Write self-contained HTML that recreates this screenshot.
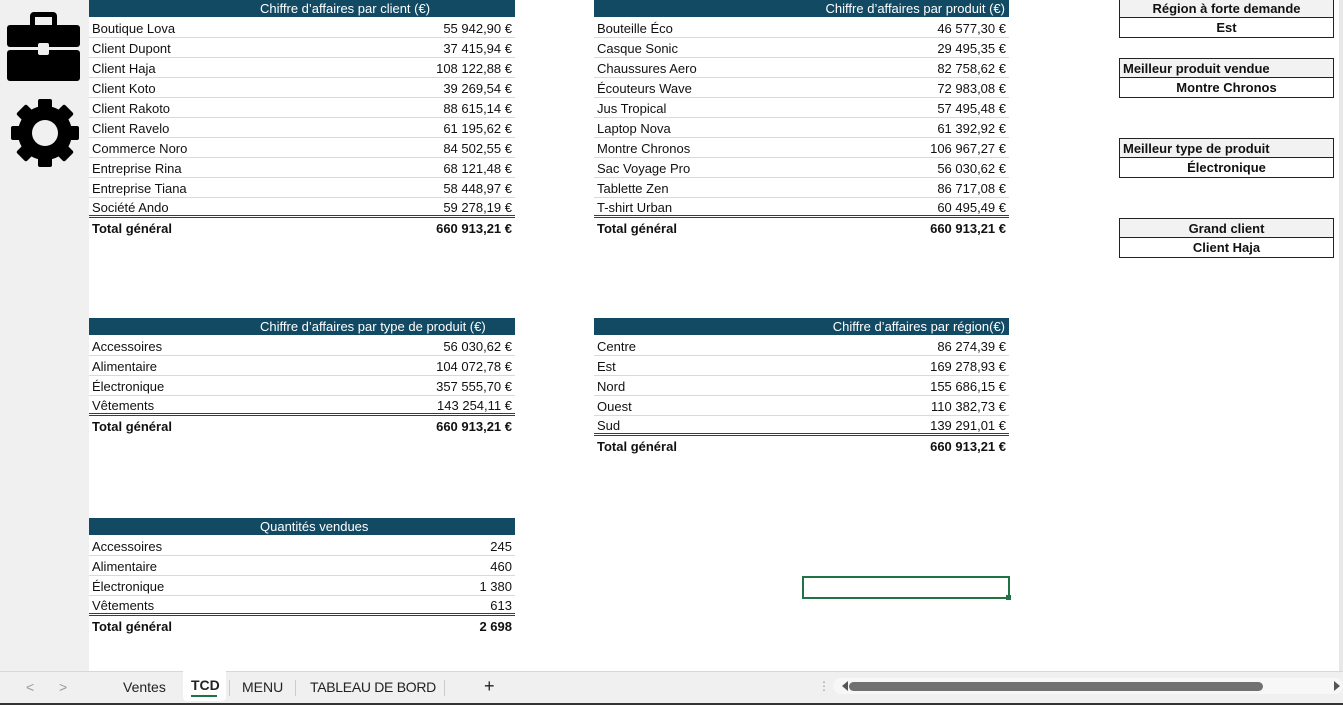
<!DOCTYPE html>
<html><head><meta charset="utf-8"><style>
*{margin:0;padding:0;box-sizing:border-box}
body{width:1343px;height:705px;overflow:hidden;background:#fff;font-family:"Liberation Sans",sans-serif;font-size:13px;color:#111;position:relative}
.side{position:absolute;left:0;top:0;width:89px;height:671px;background:#f0f0f0}
.t{position:absolute}
.h{height:18px;background:#134a63;color:#fff;line-height:18px;font-size:13px;white-space:nowrap;border-bottom:1px solid #fff}
.r{height:20px;border-bottom:1px solid #c6dfee;display:flex;justify-content:space-between;align-items:center;padding:2px 3px 0 3px;line-height:18px}
.r.last{border-bottom:3px double #134a63;padding-top:3px}
.r.tot{border-bottom:none;font-weight:bold}
.box{position:absolute;left:1119px;width:215px;font-weight:bold;font-size:13px}
.box div{height:20px;border:1px solid #222;line-height:19px;text-align:center}
.box .bh{background:#f2f2f2}
.box div+div{border-top:none}
.bar{position:absolute;left:0;top:671px;width:1343px;height:34px;background:#f0f0f0;border-top:1px solid #d8d8d8}
.tab{position:absolute;top:7px;font-size:14px;color:#222}
</style></head><body>
<div class="side">
<svg width="89" height="180" viewBox="0 0 89 180">
<path d="M30 26V16a4 4 0 0 1 4-4h19a4 4 0 0 1 4 4v10h-5v-9H35v9z" fill="#000"/>
<rect x="7" y="25" width="73" height="22" rx="3" fill="#000"/>
<rect x="7" y="50" width="73" height="31" rx="3" fill="#000"/>
<rect x="38" y="43" width="11" height="12" rx="2" fill="#f0f0f0"/>
<g transform="translate(45,133)" fill="#000">
<circle r="27"/>
<rect x="-7" y="-34" width="14" height="68" rx="2"/>
<rect x="-7" y="-34" width="14" height="68" rx="2" transform="rotate(45)"/>
<rect x="-7" y="-34" width="14" height="68" rx="2" transform="rotate(90)"/>
<rect x="-7" y="-34" width="14" height="68" rx="2" transform="rotate(135)"/>
<circle r="13" fill="#f0f0f0"/>
</g></svg>
</div>

<div class="t" style="left:89px;top:0;width:426px">
<div class="h" style="padding-left:171px">Chiffre d’affaires par client (€)</div>
<div class="r"><span>Boutique Lova</span><span>55 942,90 €</span></div>
<div class="r"><span>Client Dupont</span><span>37 415,94 €</span></div>
<div class="r"><span>Client Haja</span><span>108 122,88 €</span></div>
<div class="r"><span>Client Koto</span><span>39 269,54 €</span></div>
<div class="r"><span>Client Rakoto</span><span>88 615,14 €</span></div>
<div class="r"><span>Client Ravelo</span><span>61 195,62 €</span></div>
<div class="r"><span>Commerce Noro</span><span>84 502,55 €</span></div>
<div class="r"><span>Entreprise Rina</span><span>68 121,48 €</span></div>
<div class="r"><span>Entreprise Tiana</span><span>58 448,97 €</span></div>
<div class="r last"><span>Société Ando</span><span>59 278,19 €</span></div>
<div class="r tot"><span>Total général</span><span>660 913,21 €</span></div>
</div>

<div class="t" style="left:594px;top:0;width:415px">
<div class="h" style="text-align:right;padding-right:4px">Chiffre d’affaires par produit (€)</div>
<div class="r"><span>Bouteille Éco</span><span>46 577,30 €</span></div>
<div class="r"><span>Casque Sonic</span><span>29 495,35 €</span></div>
<div class="r"><span>Chaussures Aero</span><span>82 758,62 €</span></div>
<div class="r"><span>Écouteurs Wave</span><span>72 983,08 €</span></div>
<div class="r"><span>Jus Tropical</span><span>57 495,48 €</span></div>
<div class="r"><span>Laptop Nova</span><span>61 392,92 €</span></div>
<div class="r"><span>Montre Chronos</span><span>106 967,27 €</span></div>
<div class="r"><span>Sac Voyage Pro</span><span>56 030,62 €</span></div>
<div class="r"><span>Tablette Zen</span><span>86 717,08 €</span></div>
<div class="r last"><span>T-shirt Urban</span><span>60 495,49 €</span></div>
<div class="r tot"><span>Total général</span><span>660 913,21 €</span></div>
</div>

<div class="t" style="left:89px;top:318px;width:426px">
<div class="h" style="padding-left:171px">Chiffre d’affaires par type de produit (€)</div>
<div class="r"><span>Accessoires</span><span>56 030,62 €</span></div>
<div class="r"><span>Alimentaire</span><span>104 072,78 €</span></div>
<div class="r"><span>Électronique</span><span>357 555,70 €</span></div>
<div class="r last"><span>Vêtements</span><span>143 254,11 €</span></div>
<div class="r tot"><span>Total général</span><span>660 913,21 €</span></div>
</div>

<div class="t" style="left:594px;top:318px;width:415px">
<div class="h" style="text-align:right;padding-right:4px">Chiffre d’affaires par région(€)</div>
<div class="r"><span>Centre</span><span>86 274,39 €</span></div>
<div class="r"><span>Est</span><span>169 278,93 €</span></div>
<div class="r"><span>Nord</span><span>155 686,15 €</span></div>
<div class="r"><span>Ouest</span><span>110 382,73 €</span></div>
<div class="r last"><span>Sud</span><span>139 291,01 €</span></div>
<div class="r tot"><span>Total général</span><span>660 913,21 €</span></div>
</div>

<div class="t" style="left:89px;top:518px;width:426px">
<div class="h" style="padding-left:171px">Quantités vendues</div>
<div class="r"><span>Accessoires</span><span>245</span></div>
<div class="r"><span>Alimentaire</span><span>460</span></div>
<div class="r"><span>Électronique</span><span>1 380</span></div>
<div class="r last"><span>Vêtements</span><span>613</span></div>
<div class="r tot"><span>Total général</span><span>2 698</span></div>
</div>

<div class="box" style="top:-2px"><div class="bh">Région à forte demande</div><div>Est</div></div>
<div class="box" style="top:58px"><div class="bh" style="text-align:left;padding-left:3px">Meilleur produit vendue</div><div>Montre Chronos</div></div>
<div class="box" style="top:138px"><div class="bh" style="text-align:left;padding-left:3px">Meilleur type de produit</div><div>Électronique</div></div>
<div class="box" style="top:218px"><div class="bh">Grand client</div><div>Client Haja</div></div>

<div style="position:absolute;left:802px;top:576px;width:208px;height:23px;border:2px solid #217346"></div>
<div style="position:absolute;left:1006px;top:595px;width:5px;height:5px;background:#217346"></div>
<div style="position:absolute;left:1339px;top:0;width:4px;height:671px;background:#e8e8e8"></div>

<div class="bar">
<span class="tab" style="left:26px;color:#999">&lt;</span>
<span class="tab" style="left:59px;color:#999">&gt;</span>
<span class="tab" style="left:123px">Ventes</span>
<div style="position:absolute;left:183px;top:-1px;width:43px;height:30px;background:#fff;border-radius:0 0 4px 4px"></div>
<span class="tab" style="left:191px;top:5px;font-weight:bold">TCD</span>
<div style="position:absolute;left:191px;top:23px;width:26px;height:2px;background:#217346"></div>
<span style="position:absolute;left:229px;top:8px;width:1px;height:16px;background:#ccc"></span>
<span class="tab" style="left:242px">MENU</span>
<span style="position:absolute;left:295px;top:8px;width:1px;height:16px;background:#ccc"></span>
<span class="tab" style="left:310px;letter-spacing:-0.3px">TABLEAU DE BORD</span>
<span style="position:absolute;left:444px;top:8px;width:1px;height:16px;background:#ccc"></span>
<span class="tab" style="left:484px;top:4px;font-size:18px">+</span>
<span class="tab" style="left:818px;color:#999;font-size:12px">⋮</span>
<div style="position:absolute;left:833px;top:6px;width:510px;height:16px;background:#f7f7f7;border-radius:8px"></div>
<span style="position:absolute;left:842px;top:9px;border:5px solid transparent;border-right:6px solid #555;border-left:none"></span>
<div style="position:absolute;left:849px;top:10px;width:414px;height:9px;background:#717171;border-radius:5px"></div>
<span style="position:absolute;left:1334px;top:9px;border:5px solid transparent;border-left:6px solid #555;border-right:none"></span>
</div>
<div style="position:absolute;left:0;top:703px;width:1343px;height:2px;background:#333"></div>
</body></html>
